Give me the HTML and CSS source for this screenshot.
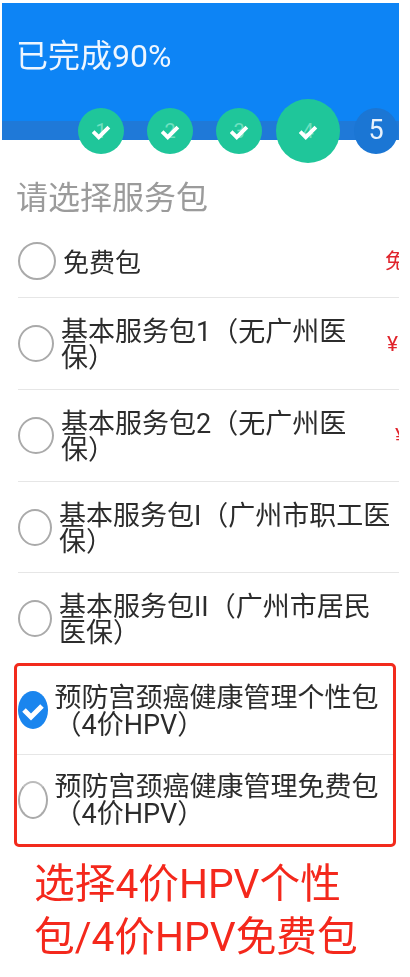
FILE: index.html
```html
<!DOCTYPE html>
<html lang="zh">
<head>
<meta charset="utf-8">
<title>请选择服务包</title>
<link rel="stylesheet" href="styles.css">
</head>
<body>
<main class="page">
  <header class="header">
    <h1 class="progress-title">已完成90%</h1>
    <div class="steps">
      <div class="step done"><span class="num">1</span><svg class="tick" viewBox="0 0 24 24"><path d="M5 12.5l5 5 9-9"/></svg></div>
      <div class="step done"><span class="num">2</span><svg class="tick" viewBox="0 0 24 24"><path d="M5 12.5l5 5 9-9"/></svg></div>
      <div class="step done"><span class="num">3</span><svg class="tick" viewBox="0 0 24 24"><path d="M5 12.5l5 5 9-9"/></svg></div>
      <div class="step done current"><span class="num">4</span><svg class="tick" viewBox="0 0 24 24"><path d="M5 12.5l5 5 9-9"/></svg></div>
      <div class="step todo"><span class="num">5</span></div>
    </div>
  </header>
  <h2 class="section-title">请选择服务包</h2>
  <section class="list">
    <div class="row row-free">
      <span class="radio r38"></span>
      <span class="label label-free">免费包</span>
      <span class="price price-free">免费</span>
    </div>
    <div class="row row-a">
      <span class="radio r36"></span>
      <span class="label">基本服务包1（无广州医<br>保）</span>
      <span class="price price-a">¥100</span>
    </div>
    <div class="row row-a">
      <span class="radio r36"></span>
      <span class="label">基本服务包2（无广州医<br>保）</span>
      <span class="price price-b">¥100</span>
    </div>
    <div class="row row-b">
      <span class="radio r34"></span>
      <span class="label">基本服务包I（广州市职工医<br>保）</span>
    </div>
    <div class="row row-b last">
      <span class="radio r34"></span>
      <span class="label">基本服务包II（广州市居民<br>医保）</span>
    </div>
  </section>
  <section class="highlight">
    <div class="row row-hpv">
      <svg class="radio-on" viewBox="0 0 30 38"><ellipse cx="15" cy="19" rx="15" ry="19" fill="#1a85ee"/><path d="M6 19l7 7 11-11" fill="none" stroke="#fff" stroke-width="5"/></svg>
      <span class="label">预防宫颈癌健康管理个性包（4价HPV）</span>
    </div>
    <div class="row row-hpv last">
      <span class="radio r30"></span>
      <span class="label">预防宫颈癌健康管理免费包（4价HPV）</span>
    </div>
  </section>
  <p class="note">选择4价HPV个性包/4价HPV免费包</p>
</main>
</body>
</html>
```
FILE: styles.css
```css
* { box-sizing: border-box; }
html, body { margin: 0; background: #fff; }
body {
  font-family: Roboto, "Noto Sans CJK SC", sans-serif;
  color: #333;
}
.page {
  width: 399px;
  padding: 3px 0 0 2px;
  filter: blur(0.5px);
}
.header {
  height: 137px;
  background: linear-gradient(#0d84f5 0 118px, #1f79d8 118px);
  display: flex;
  flex-direction: column;
}
.progress-title {
  margin: 0;
  padding: 33px 0 0 14px;
  height: 118px;
  font-size: 32px;
  line-height: 40px;
  font-weight: 400;
  color: #eef6ff;
}
.steps {
  height: 19px;
  padding-left: 76px;
  display: flex;
  align-items: center;
}
.step {
  flex: none;
  position: relative;
  width: 46px;
  height: 46px;
  margin-right: 23px;
  border-radius: 50%;
  display: flex;
  align-items: center;
  justify-content: center;
  font-size: 27px;
}
.done { background: #1fc69a; color: #6fe0c0; }
.current { width: 64px; height: 64px; margin: 0 14px 0 -9px; }
.todo { width: 44px; margin: 0; background: #1b76d4; color: #e8f2fc; }
.num { line-height: 1; }
.done .num { font-size: 20px; }
.tick {
  position: absolute;
  left: 50%;
  top: 50%;
  width: 27px;
  height: 27px;
  transform: translate(-50%, -50%);
  fill: none;
  stroke: #fff;
  stroke-width: 3.4;
}
.section-title {
  margin: 0;
  padding: 38px 0 0 14px;
  height: 85px;
  font-size: 32px;
  line-height: 40px;
  font-weight: 400;
  color: #9b9b9b;
}
.list { margin-left: 16px; }
.row {
  display: flex;
  align-items: center;
  border-bottom: 1.5px solid #e6e6e6;
  font-size: 27px;
  line-height: 26px;
  color: #2c2c2c;
}
.row.last { border-bottom: 0; }
.row-free { height: 73px; gap: 7px; }
.row-a { height: 92px; gap: 7px; }
.row-b { height: 91px; gap: 7px; }
.row-b.last { height: 90px; }
.label { flex: 1; min-width: 0; padding-top: 3px; }
.label-free { font-size: 26px; }
.radio {
  flex: none;
  border: 2.5px solid #aaa;
  border-radius: 50%;
}
.r38 { width: 38px; height: 38px; }
.r36 { width: 36px; height: 37px; }
.r34 { width: 34px; height: 37px; }
.r30 { width: 30px; height: 38px; border-top-color: #bbb; }
.radio-on { flex: none; width: 30px; height: 38px; }
.price {
  flex: none;
  overflow: hidden;
  white-space: nowrap;
  color: #e0242c;
  font-size: 21px;
}
.price-free { width: 14px; }
.price-a { width: 12px; }
.price-b { width: 4px; }
.highlight {
  width: 382px;
  height: 184px;
  margin-left: 12px;
  border: 3.5px solid #f22a1c;
  border-radius: 5px;
}
.row-hpv {
  height: 89px;
  padding-left: 0.5px;
  gap: 7px;
  line-height: 27px;
}
.row-hpv.last { height: 89px; }
.note {
  margin: 11px 0 0 32px;
  width: 340px;
  font-size: 40.7px;
  line-height: 53px;
  color: #f4281c;
}
```
